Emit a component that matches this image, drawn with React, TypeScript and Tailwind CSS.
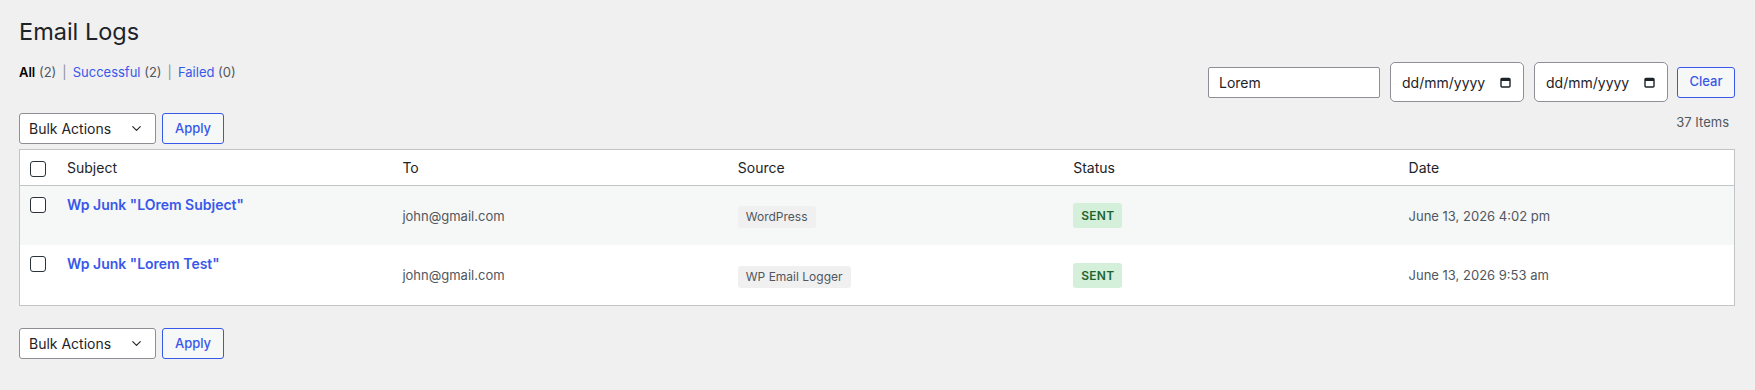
import { ChevronDown } from "lucide-react";

const rows = [
  {
    subject: 'Wp Junk "LOrem Subject"',
    to: "john@gmail.com",
    source: "WordPress",
    status: "SENT",
    date: "June 13, 2026 4:02 pm",
  },
  {
    subject: 'Wp Junk "Lorem Test"',
    to: "john@gmail.com",
    source: "WP Email Logger",
    status: "SENT",
    date: "June 13, 2026 9:53 am",
  },
];

function Checkbox() {
  return <span className="block w-[16px] h-[16px] rounded-[3px] border border-[#2c3338] bg-white" />;
}

function BulkActions() {
  return (
    <div className="flex gap-[6px]">
      <div className="flex items-center justify-between w-[137px] h-[31px] pl-[9px] pr-[11px] bg-white border border-[#8c8f94] rounded-[3px] text-[14px] text-[#1d2327]">
        <span>Bulk Actions</span>
        <ChevronDown size={15} strokeWidth={1.8} className="text-[#1d2327]" />
      </div>
      <button className="w-[62px] h-[31px] border border-[#3858e9] rounded-[3px] bg-[#f6f7f7] text-[13px] font-medium text-[#3858e9]">
        Apply
      </button>
    </div>
  );
}

function CalendarIcon() {
  return (
    <svg width="11" height="11" viewBox="0 0 11 11" fill="none">
      <rect x="1" y="1.5" width="9" height="8.5" rx="1" stroke="#1d2327" strokeWidth="1.4" />
      <rect x="1" y="1.5" width="9" height="2.5" fill="#1d2327" />
    </svg>
  );
}

function DateInput() {
  return (
    <div className="flex items-center justify-between w-[134px] h-[40px] pl-[11px] pr-[12px] bg-white border border-[#8c8f94] rounded-[5px] text-[14px] text-[#1d2327]">
      <span>dd/mm/yyyy</span>
      <CalendarIcon />
    </div>
  );
}

export default function App() {
  return (
    <div
      className="min-h-screen bg-[#f0f0f1] pl-[19px] pr-[20px] pt-[17px] pb-[20px] text-[#1d2327]"
      style={{ fontFamily: "Inter, 'Noto Sans', sans-serif" }}
    >
      <h1 className="text-[23.5px] leading-[30px] font-normal">Email Logs</h1>

      {/* Filters */}
      <div className="flex justify-between items-start mt-[15px]">
        <div className="pt-[1px] text-[13px] leading-[18px] text-[#50575e]">
          <span className="font-semibold text-[#000]">All</span> (2)
          <span className="mx-[6px] text-[#8c8f94]">|</span>
          <span className="text-[#3858e9]">Successful</span> (2)
          <span className="mx-[6px] text-[#8c8f94]">|</span>
          <span className="text-[#3858e9]">Failed</span> (0)
        </div>
        <div className="flex items-center">
          <div className="flex items-center w-[172px] h-[31px] pl-[10px] bg-white border border-[#8c8f94] rounded-[2px] text-[14px]">
            Lorem
          </div>
          <div className="ml-[10px]">
            <DateInput />
          </div>
          <div className="ml-[10px]">
            <DateInput />
          </div>
          <button className="ml-[9px] w-[58px] h-[31px] border border-[#3858e9] rounded-[3px] bg-[#f6f7f7] text-[13px] font-medium text-[#3858e9]">
            Clear
          </button>
        </div>
      </div>

      {/* Top nav */}
      <div className="flex justify-between items-start mt-[11px]">
        <BulkActions />
        <span className="pr-[6px] text-[13px] leading-[18px] text-[#50575e]">37 Items</span>
      </div>

      {/* Table */}
      <div className="mt-[5px] bg-white border border-[#c3c4c7]">
        <table className="w-full table-fixed border-collapse">
          <colgroup>
            <col className="w-[37px]" />
            <col />
            <col />
            <col />
            <col />
            <col />
          </colgroup>
          <thead>
            <tr className="h-[35px] border-b border-[#c3c4c7] text-left text-[14px] text-[#1d2327]">
              <th className="pl-[10px] pt-[3px] align-middle font-normal">
                <Checkbox />
              </th>
              <th className="pl-[10px] font-normal">Subject</th>
              <th className="pl-[10px] font-normal">To</th>
              <th className="pl-[10px] font-normal">Source</th>
              <th className="pl-[10px] font-normal">Status</th>
              <th className="pl-[10px] font-normal">Date</th>
            </tr>
          </thead>
          <tbody>
            {rows.map((r, i) => (
              <tr key={i} className={`h-[60px] ${i % 2 === 0 ? "bg-[#f6f7f7]" : "bg-white"}`}>
                <td className="pl-[10px] pt-[11px] align-top">
                  <Checkbox />
                </td>
                <td className="pl-[10px] pt-[6px] align-top">
                  <a className="text-[14px] leading-[20px] font-semibold text-[#3858e9]">{r.subject}</a>
                </td>
                <td className="pl-[10px] pt-[2px] align-middle text-[13px] text-[#50575e]">{r.to}</td>
                <td className="pl-[10px] align-middle">
                  <span className="inline-block px-[8px] py-[3px] rounded-[3px] bg-[#f0f0f1] text-[12px] leading-[16px] text-[#50575e]">
                    {r.source}
                  </span>
                </td>
                <td className="pl-[10px] align-middle">
                  <span className="inline-block px-[8px] py-[4px] rounded-[3px] bg-[#d4efda] text-[12px] leading-[17px] font-semibold tracking-[0.3px] text-[#1e6430]">
                    {r.status}
                  </span>
                </td>
                <td className="pl-[10px] pt-[2px] align-middle text-[13px] text-[#50575e]">{r.date}</td>
              </tr>
            ))}
          </tbody>
        </table>
      </div>

      {/* Bottom nav */}
      <div className="mt-[22px]">
        <BulkActions />
      </div>
    </div>
  );
}
